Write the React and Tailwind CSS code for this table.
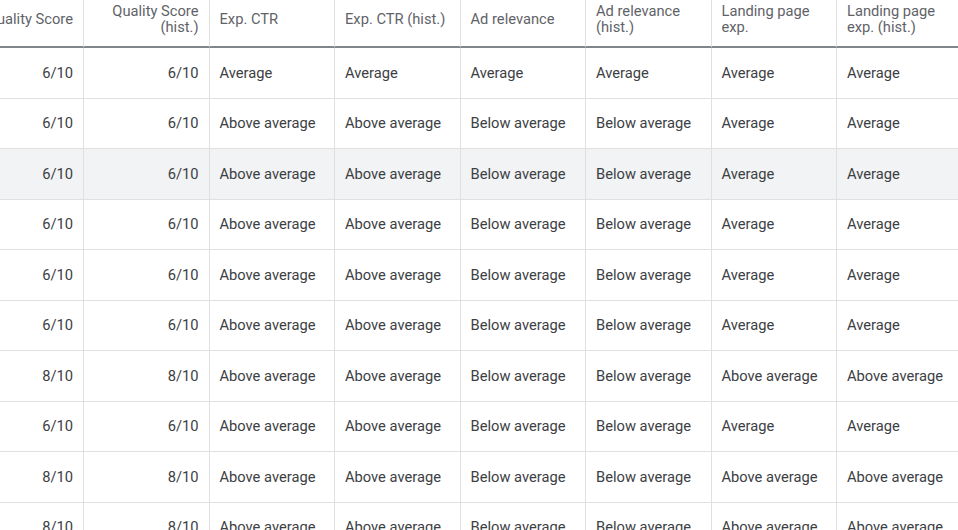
import React from "react";

const columns = [
  { label: "Quality Score", align: "right" },
  { label: "Quality Score (hist.)", align: "right" },
  { label: "Exp. CTR", align: "left" },
  { label: "Exp. CTR (hist.)", align: "left" },
  { label: "Ad relevance", align: "left" },
  { label: "Ad relevance (hist.)", align: "left" },
  { label: "Landing page exp.", align: "left" },
  { label: "Landing page exp. (hist.)", align: "left" },
];

const AVG = "Average";
const ABOVE = "Above average";
const BELOW = "Below average";

const sixRow = ["6/10", "6/10", ABOVE, ABOVE, BELOW, BELOW, AVG, AVG];
const eightRow = ["8/10", "8/10", ABOVE, ABOVE, BELOW, BELOW, ABOVE, ABOVE];

const rows = [
  ["6/10", "6/10", AVG, AVG, AVG, AVG, AVG, AVG],
  sixRow,
  sixRow,
  sixRow,
  sixRow,
  sixRow,
  eightRow,
  sixRow,
  eightRow,
  eightRow,
];

const HIGHLIGHTED = 2;

export default function App() {
  return (
    <div
      className="w-[958px] h-[530px] overflow-hidden bg-white"
      style={{ fontFamily: "Roboto, 'Noto Sans', sans-serif" }}
    >
      <table className="ml-[-41.5px] w-[1004px] table-fixed border-separate border-spacing-0">
        <colgroup>
          {columns.map((c) => (
            <col key={c.label} className="w-[125.5px]" />
          ))}
        </colgroup>
        <thead>
          <tr>
            {columns.map((c) => (
              <th
                key={c.label}
                className={`h-[48px] px-[10px] pt-[3px] pb-[11px] align-middle border-r border-r-[#e0e0e0] border-b-2 border-b-[#80868b] text-[14.7px] leading-4 font-normal text-[#5f6368] ${
                  c.align === "right" ? "text-right" : "text-left"
                }`}
              >
                {c.label}
              </th>
            ))}
          </tr>
        </thead>
        <tbody>
          {rows.map((row, i) => (
            <tr key={i} className={i === HIGHLIGHTED ? "bg-[#f1f3f4]" : "bg-white"}>
              {row.map((cell, j) => (
                <td
                  key={j}
                  className={`h-[50.5px] px-[10px] py-0 align-middle whitespace-nowrap border-r border-b border-[#e0e0e0] text-[14.7px] text-[#3c4043] ${
                    columns[j].align === "right" ? "text-right" : "text-left"
                  }`}
                >
                  {cell}
                </td>
              ))}
            </tr>
          ))}
        </tbody>
      </table>
    </div>
  );
}
